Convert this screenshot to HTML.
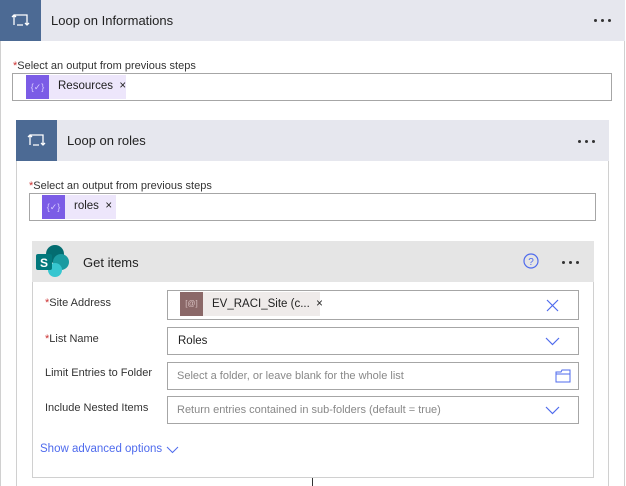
<!DOCTYPE html>
<html><head><meta charset="utf-8"><style>
*{margin:0;padding:0;box-sizing:border-box}
body{width:626px;height:486px;background:#fff;position:relative;overflow:hidden;font-family:"Segoe UI","Liberation Sans",sans-serif;color:#222}
.a{position:absolute}
.hdr{background:#e6e7ee}
.icon{background:#4c6a94}
.t{font-size:13px;color:#222}
.lbl{font-size:11px;color:#333}
.req{color:#c33}
.box{border:1px solid #a6a6a6;background:#fff}
.dot{position:absolute;width:3px;height:3px;border-radius:50%;background:#333}
.ph{font-size:11px;color:#888}
</style></head><body>
<!-- outer card -->
<div class="a" style="left:0;top:0;width:625px;height:486px;border:1px solid #d0d0d0;border-bottom:none"></div>
<div class="a hdr" style="left:0;top:0;width:625px;height:41px"></div>
<div class="a icon" style="left:0;top:0;width:41px;height:41px"></div>
<svg class="a" style="left:11px;top:12px" width="20" height="17" viewBox="0 0 20 17" fill="none" stroke="#fff" stroke-width="1.3"><path d="M3 3v10M1 5l2-2 2 2M3 3h13v10"/><path d="M14 11l2 2 2-2M6 13h6"/></svg>
<div class="a t" style="left:51px;top:13px">Loop on Informations</div>
<div class="dot" style="left:594px;top:19px"></div><div class="dot" style="left:601px;top:19px"></div><div class="dot" style="left:608px;top:19px"></div>
<div class="a lbl" style="left:13px;top:60px"><span class="req">*</span>Select an output from previous steps</div>
<div class="a box" style="left:12px;top:73px;width:600px;height:28px"></div>
<div class="a" style="left:26px;top:75px;width:100px;height:24px;background:#ede6fb"></div>
<div class="a" style="left:26px;top:75px;width:23px;height:24px;background:#7b5ce6;color:#d8ccff;font-size:9px;text-align:center;line-height:24px">{✓}</div>
<div class="a" style="left:58px;top:80px;font-size:11.5px">Resources&nbsp;&nbsp;×</div>
<!-- inner loop -->
<div class="a" style="left:16px;top:120px;width:593px;height:366px;border:1px solid #d0d0d0;border-bottom:none"></div>
<div class="a hdr" style="left:16px;top:120px;width:593px;height:41px"></div>
<div class="a icon" style="left:16px;top:120px;width:41px;height:41px"></div>
<svg class="a" style="left:27px;top:132px" width="20" height="17" viewBox="0 0 20 17" fill="none" stroke="#fff" stroke-width="1.3"><path d="M3 3v10M1 5l2-2 2 2M3 3h13v10"/><path d="M14 11l2 2 2-2M6 13h6"/></svg>
<div class="a t" style="left:67px;top:133px">Loop on roles</div>
<div class="dot" style="left:578px;top:140px"></div><div class="dot" style="left:585px;top:140px"></div><div class="dot" style="left:592px;top:140px"></div>
<div class="a lbl" style="left:29px;top:180px"><span class="req">*</span>Select an output from previous steps</div>
<div class="a box" style="left:29px;top:193px;width:567px;height:28px"></div>
<div class="a" style="left:42px;top:195px;width:74px;height:24px;background:#ede6fb"></div>
<div class="a" style="left:42px;top:195px;width:23px;height:24px;background:#7b5ce6;color:#d8ccff;font-size:9px;text-align:center;line-height:24px">{✓}</div>
<div class="a" style="left:74px;top:200px;font-size:11.5px">roles&nbsp;&nbsp;×</div>
<!-- get items -->
<div class="a" style="left:32px;top:241px;width:562px;height:237px;border:1px solid #d0d0d0"></div>
<div class="a" style="left:32px;top:241px;width:562px;height:41px;background:#e5e5e5"></div>
<svg class="a" style="left:35px;top:243px" width="36" height="36" viewBox="0 0 36 36"><circle cx="20" cy="11" r="9" fill="#036c70"/><circle cx="26" cy="19" r="8" fill="#1a9ba1"/><circle cx="20" cy="27" r="7" fill="#37c6d0"/><rect x="1" y="11" width="16" height="16" rx="2" fill="#03787c"/><text x="9" y="24" font-size="12" fill="#fff" font-family="Liberation Sans" font-weight="bold" text-anchor="middle">S</text></svg>
<div class="a t" style="left:83px;top:255px">Get items</div>
<svg class="a" style="left:523px;top:253px" width="16" height="16" viewBox="0 0 16 16"><circle cx="8" cy="8" r="7" fill="none" stroke="#4f6bed" stroke-width="1.2"/><text x="8" y="12" font-size="10" fill="#4f6bed" text-anchor="middle" font-family="Liberation Sans">?</text></svg>
<div class="dot" style="left:562px;top:261px"></div><div class="dot" style="left:569px;top:261px"></div><div class="dot" style="left:576px;top:261px"></div>

<div class="a lbl" style="left:45px;top:297px"><span class="req">*</span>Site Address</div>
<div class="a box" style="left:167px;top:290px;width:412px;height:30px"></div>
<div class="a" style="left:180px;top:292px;width:140px;height:24px;background:#efebea"></div>
<div class="a" style="left:180px;top:292px;width:23px;height:24px;background:#8b6868;color:#d9c2c2;font-size:8px;text-align:center;line-height:24px">[@]</div>
<div class="a" style="left:212px;top:298px;font-size:11.5px">EV_RACI_Site (c...&nbsp;&nbsp;×</div>
<svg class="a" style="left:546px;top:299px" width="13" height="13"><path d="M1 1l11 11M12 1L1 12" stroke="#4f6bed" stroke-width="1.2"/></svg>

<div class="a lbl" style="left:45px;top:333px"><span class="req">*</span>List Name</div>
<div class="a box" style="left:167px;top:327px;width:412px;height:28px"></div>
<div class="a" style="left:178px;top:335px;font-size:11.5px">Roles</div>
<svg class="a" style="left:545px;top:337px" width="15" height="9"><path d="M1 1l6.5 6.5L14 1" fill="none" stroke="#4f6bed" stroke-width="1.2"/></svg>

<div class="a lbl" style="left:45px;top:367px">Limit Entries to Folder</div>
<div class="a box" style="left:167px;top:362px;width:412px;height:28px"></div>
<div class="a ph" style="left:177px;top:370px">Select a folder, or leave blank for the whole list</div>
<svg class="a" style="left:555px;top:369px" width="16" height="14"><path d="M1 3h5l1-2h8v12H1z M1 5h14" fill="none" stroke="#4f6bed" stroke-width="1"/></svg>

<div class="a lbl" style="left:45px;top:402px">Include Nested Items</div>
<div class="a box" style="left:167px;top:396px;width:412px;height:28px"></div>
<div class="a ph" style="left:177px;top:404px">Return entries contained in sub-folders (default = true)</div>
<svg class="a" style="left:545px;top:406px" width="15" height="9"><path d="M1 1l6.5 6.5L14 1" fill="none" stroke="#4f6bed" stroke-width="1.2"/></svg>

<div class="a" style="left:40px;top:443px;font-size:11.5px;color:#4f6bed">Show advanced options</div>
<svg class="a" style="left:166px;top:446px" width="13" height="8"><path d="M1 1l5.5 5.5L12 1" fill="none" stroke="#4f6bed" stroke-width="1"/></svg>
<div class="a" style="left:312px;top:478px;width:1px;height:8px;background:#333"></div>
</body></html>
